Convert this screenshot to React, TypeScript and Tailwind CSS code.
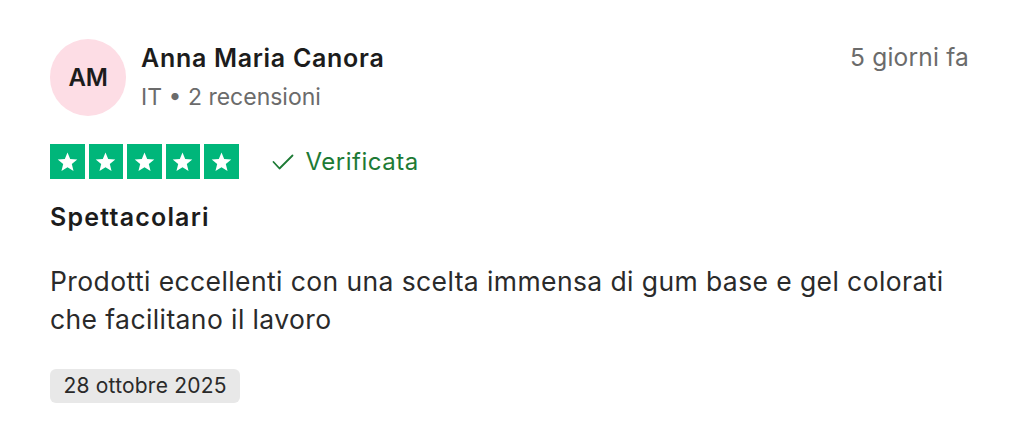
const Star = () => (
  <svg viewBox="0 0 24 24" className="w-[23px] h-[23px]" fill="white">
    <path d="M12 2.5l2.8 6.9 7.4.5-5.7 4.7 1.8 7.2L12 17.9l-6.3 3.9 1.8-7.2L1.8 9.9l7.4-.5z" />
  </svg>
)

const App = () => {
  return (
    <div className="w-[1024px] h-[435px] bg-white font-['Inter',sans-serif] text-[#1c1c1c] pl-[50px] pr-[55px] pt-[39px]">
      <div className="flex items-start">
        <div className="w-[76px] h-[77px] rounded-full bg-[#fddde5] flex items-center justify-center shrink-0">
          <span className="text-[24px] font-semibold tracking-[-0.3px] text-[#1c1c1c]">AM</span>
        </div>
        <div className="ml-[15px] pt-[4px] flex-1">
          <p className="text-[25px] leading-[30px] font-semibold tracking-[0.7px]">Anna Maria Canora</p>
          <p className="mt-[10px] text-[23px] leading-[28px] text-[#6b6b6b]">IT • 2 recensioni</p>
        </div>
        <p className="pt-[3px] text-[24.5px] leading-[30px] text-[#6b6b6b] tracking-[0.2px]">5 giorni fa</p>
      </div>

      <div className="mt-[28px] flex items-center">
        <div className="flex gap-[4px]">
          {[0, 1, 2, 3, 4].map((i) => (
            <div key={i} className="w-[34.5px] h-[35px] bg-[#00b67a] flex items-center justify-center">
              <Star />
            </div>
          ))}
        </div>
        <div className="ml-[33px] flex items-center text-[#1d7a35]">
          <svg viewBox="0 0 22 16" className="w-[22px] h-[16px]" fill="none" stroke="currentColor" strokeWidth="1.8" strokeLinecap="round" strokeLinejoin="round">
            <path d="M1.5 8l6 6.5L20.5 1.5" />
          </svg>
          <span className="ml-[12px] text-[24px] leading-[30px] tracking-[0.5px]">Verificata</span>
        </div>
      </div>

      <p className="mt-[23px] text-[25px] leading-[30px] font-semibold tracking-[1.2px]">Spettacolari</p>

      <p className="mt-[31px] text-[26.5px] leading-[37.5px] tracking-[0.4px] text-[#2a2a2a]">
        Prodotti eccellenti con una scelta immensa di gum base e gel colorati che facilitano il lavoro
      </p>

      <div className="mt-[31px] inline-flex h-[34px] items-center rounded-[6px] bg-[#e8e8e8] px-[13.5px]">
        <span className="text-[21px] tracking-[0.2px] text-[#2a2a2a]">28 ottobre 2025</span>
      </div>
    </div>
  )
}

export default App
